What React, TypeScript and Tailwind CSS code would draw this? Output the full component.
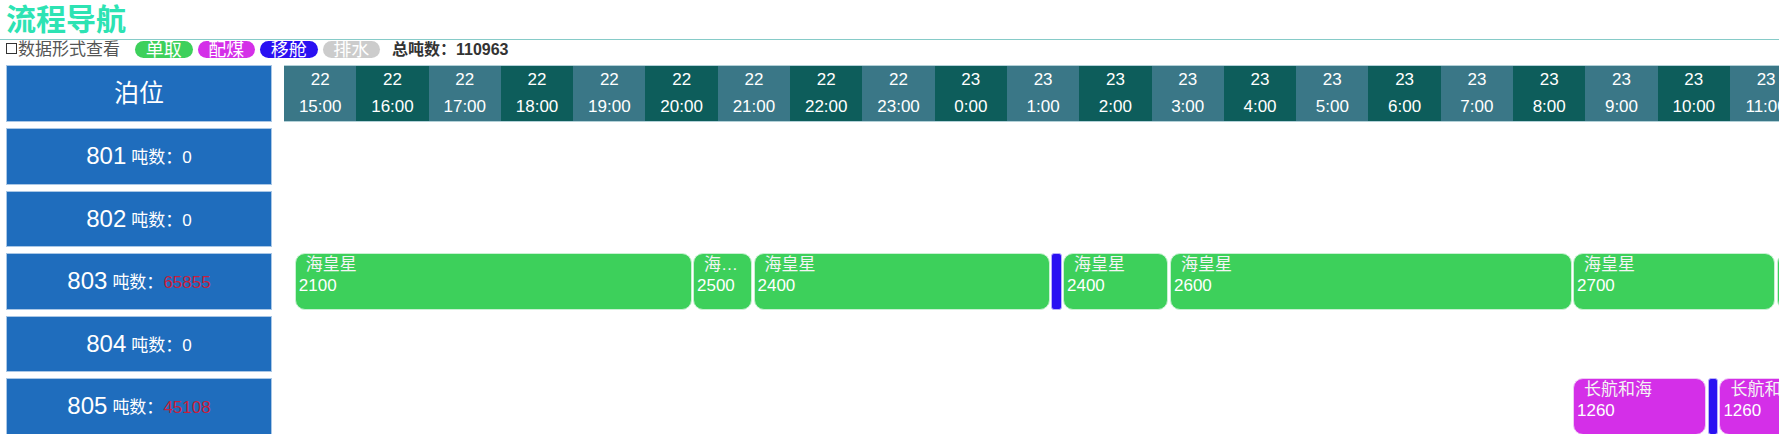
type Bar = {
  left: number
  width: number
  kind: 'green' | 'purple' | 'blue'
  name?: string
  num?: number
}

const PX_PER_HOUR = 72.3

const berths = [
  { id: '801', tons: 0 },
  { id: '802', tons: 0 },
  { id: '803', tons: 65855 },
  { id: '804', tons: 0 },
  { id: '805', tons: 45108 },
]

// bar positions in px from the 15:00 line
const bars: Record<string, Bar[]> = {
  '803': [
    { left: 10.8, width: 397, kind: 'green', name: '海皇星', num: 2100 },
    { left: 409, width: 59, kind: 'green', name: '海皇星', num: 2500 },
    { left: 469.5, width: 296, kind: 'green', name: '海皇星', num: 2400 },
    { left: 766.8, width: 11, kind: 'blue' },
    { left: 779, width: 105, kind: 'green', name: '海皇星', num: 2400 },
    { left: 886, width: 402, kind: 'green', name: '海皇星', num: 2600 },
    { left: 1289, width: 201.6, kind: 'green', name: '海皇星', num: 2700 },
    { left: 1492.5, width: 200, kind: 'green', name: '海皇星', num: 2500 },
  ],
  '805': [
    { left: 1289, width: 132.6, kind: 'purple', name: '长航和海', num: 1260 },
    { left: 1424, width: 10, kind: 'blue' },
    { left: 1435.4, width: 200, kind: 'purple', name: '长航和海', num: 1260 },
  ],
}

const barClass = {
  green: 'bg-[#3dd05b] border border-[#c9f1d2] rounded-[10px]',
  purple: 'bg-[#d42fe8] border border-[#f0c8f6] rounded-[10px]',
  blue: 'bg-[#2a10f2] border border-[#b8b0fa] rounded-[3px]',
}

const hours = Array.from({ length: 24 }, (_, i) => {
  const h = 15 + i
  return { day: h < 24 ? 22 : 23, time: `${h % 24}:00` }
})

const legend = [
  { label: '单取', cls: 'bg-[#3dd05b]' },
  { label: '配煤', cls: 'bg-[#d42fe8]' },
  { label: '移舱', cls: 'bg-[#2a10f2]' },
  { label: '排水', cls: 'bg-[#cccccc]' },
]

function BerthLabel({ id, tons }: { id: string; tons: number }) {
  return (
    <div className="w-[266px] h-[56.5px] shrink-0 bg-[#1f6dbd] border border-[#a9c7e6] flex items-center justify-center text-white">
      <span className="text-[24px]">{id}</span>
      <span className="text-[17px] ml-[5px] mt-[3px]">吨数：</span>
      <span className={`text-[17px] mt-[3px] ${tons > 0 ? 'text-[#c81e3c]' : 'text-white'}`}>{tons}</span>
    </div>
  )
}

function TimelineBar({ bar }: { bar: Bar }) {
  return (
    <div
      className={`absolute top-0 h-full overflow-hidden text-white text-[17px] ${barClass[bar.kind]}`}
      style={{ left: bar.left, width: bar.width }}
    >
      {bar.name && (
        <>
          <div className="px-[10px] leading-[21px] truncate text-[#f4f4f4]">{bar.name}</div>
          <div className="pl-[3px] leading-[22px] whitespace-nowrap">{bar.num}</div>
        </>
      )}
    </div>
  )
}

export default function App() {
  return (
    <div className="w-[1785px] h-[434px] overflow-hidden bg-white font-['Liberation_Sans','Noto_Sans_CJK_SC',sans-serif]">
      <div className="mr-[6px] border-b border-[#86cbc8] pl-[6px] h-[40px] leading-[39px] text-[30px] font-bold text-[#2de3b3]">
        流程导航
      </div>

      <div className="flex items-center h-[19px] pl-[6px] text-[17px]">
        <input type="checkbox" className="appearance-none w-[11px] h-[11px] border border-[#333] bg-white m-0 mt-[-2px]" />
        <span className="ml-[1px] text-[#555]">数据形式查看</span>
        <div className="flex items-center gap-[5px] ml-[15px]">
          {legend.map((l) => (
            <span
              key={l.label}
              className={`w-[57.5px] h-[17px] rounded-full text-white text-[18px] flex items-center justify-center leading-none ${l.cls}`}
            >
              {l.label}
            </span>
          ))}
        </div>
        <span className="ml-[12px] font-bold text-[16px] text-[#333]">总吨数：110963</span>
      </div>

      <div className="mt-[6px] px-[6px] flex flex-col gap-[6px]">
        <div className="flex gap-[12px]">
          <div className="w-[266px] h-[57px] shrink-0 bg-[#1f6dbd] border border-[#a9c7e6] flex items-center justify-center text-white text-[25px]">
            泊位
          </div>
          <div className="flex-1 overflow-hidden flex border-y border-[#b3d1d8]">
            {hours.map((h, i) => (
              <div
                key={i}
                className={`w-[72.3px] shrink-0 text-center text-white text-[17px] ${i % 2 === 0 ? 'bg-[#3a7787]' : 'bg-[#0d5d5b]'}`}
              >
                <div className="h-[27px] leading-[27px]">{h.day}</div>
                <div className="h-[28px] leading-[28px]">{h.time}</div>
              </div>
            ))}
          </div>
        </div>

        {berths.map((b) => (
          <div key={b.id} className="flex gap-[12px]">
            <BerthLabel id={b.id} tons={b.tons} />
            <div className="relative flex-1 h-[56.5px] overflow-hidden" data-px-per-hour={PX_PER_HOUR}>
              {(bars[b.id] ?? []).map((bar, i) => (
                <TimelineBar key={i} bar={bar} />
              ))}
            </div>
          </div>
        ))}
      </div>
    </div>
  )
}
